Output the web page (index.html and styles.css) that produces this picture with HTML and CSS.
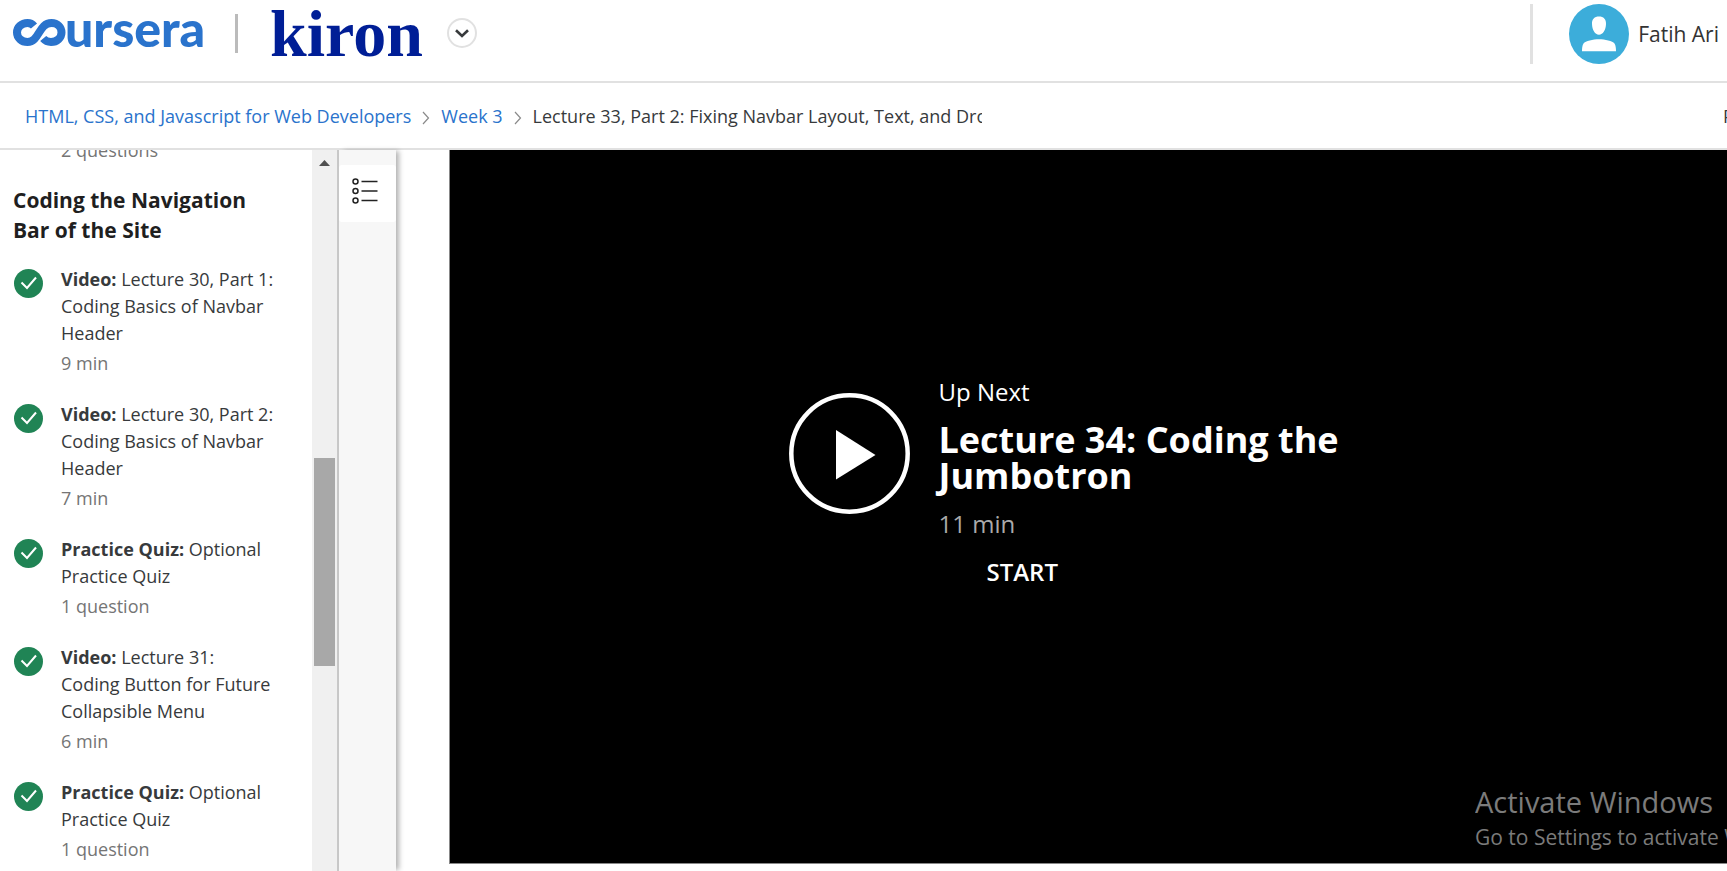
FILE: index.html
```html
<!DOCTYPE html>
<html lang="en">
<head>
<meta charset="utf-8">
<title>Lecture 33, Part 2 | Coursera</title>
<meta name="viewport" content="width=device-width, initial-scale=1">
<link rel="stylesheet" href="styles.css">
</head>
<body>
<svg class="sprite" aria-hidden="true">
  <symbol id="check" viewBox="0 0 29 29">
    <circle cx="14.500" cy="14.500" r="14.500" fill="#208455"/>
    <path d="M7.500 13.500l5.500 5.500 9-10.500" fill="none" stroke="#fff" stroke-width="2"/>
  </symbol>
  <symbol id="crumb" viewBox="0 0 8 14">
    <path d="M1 1l5.500 6L1 13" fill="none" stroke="#8a8a8a" stroke-width="1.200"/>
  </symbol>
</svg>

<header class="header">
  <a class="coursera" href="#" aria-label="Coursera">
    <svg class="coursera-mark" width="53" height="27" viewBox="0 0 53 27" aria-hidden="true">
      <path d="M21 7C19.300 5 17 4 14.500 4C8.500 4 4 8.300 4 13.500s4.500 9.500 10.500 9.500c12 0 11-19 24-19C44.500 4 48.500 8.300 48.500 13.500s-4.500 9.500-10.500 9.500c-3.200 0-5.800-1.200-7.800-3.500" fill="none" stroke="#2a73cc" stroke-width="8"/>
    </svg><span class="coursera-word">ursera</span>
  </a>
  <span class="divider"></span>
  <a class="kiron" href="#">kiron</a>
  <button class="switch" type="button" aria-label="Switch program">
    <svg width="14" height="9" viewBox="0 0 14 9"><path d="M1 1.200l6 5.800 6-5.800" fill="none" stroke="#373a3c" stroke-width="2.600"/></svg>
  </button>
  <a class="user" href="#">
    <svg class="avatar" viewBox="0 0 60 60" aria-hidden="true">
      <circle cx="30" cy="30" r="30" fill="#3cadda"/>
      <path d="M30 12.500c4.500 0 7.200 2.500 7 7.500-.2 6-3 10.700-7 10.700s-6.800-4.700-7-10.700c-.2-5 2.500-7.500 7-7.500zM13 47.300c0-3 .3-6 1.500-7.800C16.500 37 24 35.300 30 35.300S43.500 37 45.500 39.500c1.200 1.800 1.500 4.800 1.500 7.800z" fill="#fff"/>
    </svg>
    <span>Fatih Ari</span>
  </a>
</header>

<nav class="crumbs" aria-label="Breadcrumb">
  <a href="#">HTML, CSS, and Javascript for Web Developers</a>
  <svg class="crumb-icon"><use href="#crumb"/></svg>
  <a href="#">Week 3</a>
  <svg class="crumb-icon"><use href="#crumb"/></svg>
  <span class="current">Lecture 33, Part 2: Fixing Navbar Layout, Text, and Dropdown</span>
  <a class="prev" href="#">Prev</a>
</nav>

<div class="main">
  <aside class="sidebar">
    <div class="outline">
      <p class="meta previous">2 questions</p>
      <h2>Coding the Navigation Bar of the Site</h2>
      <ul class="items">
        <li><svg class="check"><use href="#check"/></svg><div><a href="#"><strong>Video:</strong> Lecture 30, Part 1: Coding Basics of Navbar Header</a><p class="meta">9 min</p></div></li>
        <li><svg class="check"><use href="#check"/></svg><div><a href="#"><strong>Video:</strong> Lecture 30, Part 2: Coding Basics of Navbar Header</a><p class="meta">7 min</p></div></li>
        <li><svg class="check"><use href="#check"/></svg><div><a href="#"><strong>Practice Quiz:</strong> Optional Practice Quiz</a><p class="meta">1 question</p></div></li>
        <li><svg class="check"><use href="#check"/></svg><div><a href="#"><strong>Video:</strong> Lecture 31: Coding Button for Future Collapsible Menu</a><p class="meta">6 min</p></div></li>
        <li><svg class="check"><use href="#check"/></svg><div><a href="#"><strong>Practice Quiz:</strong> Optional Practice Quiz</a><p class="meta">1 question</p></div></li>
      </ul>
    </div>
    <div class="scrollbar">
      <svg width="11" height="6" viewBox="0 0 11 6"><path d="M0 6L5.500 0 11 6z" fill="#505050"/></svg>
      <span class="thumb"></span>
    </div>
  </aside>

  <div class="rail">
    <button class="rail-tab" type="button" aria-label="Course outline">
      <svg width="26" height="26" viewBox="0 0 26 26" fill="none" stroke="#222" stroke-width="1.500">
        <circle cx="3.500" cy="3.500" r="2.500"/><circle cx="3.500" cy="13" r="2.500"/><circle cx="3.500" cy="22.500" r="2.500"/>
        <path d="M9.500 3.500h16M9.500 13h16M9.500 22.500h16"/>
      </svg>
    </button>
  </div>

  <main class="stage">
    <section class="video">
      <div class="next">
        <button class="play" type="button" aria-label="Play next lecture">
          <svg viewBox="0 0 121 121"><circle cx="60.500" cy="60.500" r="58.200" fill="none" stroke="#fff" stroke-width="4.500"/><path d="M47 37l39.500 25L47 86.500z" fill="#fff"/></svg>
        </button>
        <div class="next-text">
          <p class="up">Up Next</p>
          <h1>Lecture 34: Coding the Jumbotron</h1>
          <p class="length">11 min</p>
          <button class="start" type="button">START</button>
        </div>
      </div>
    </section>
  </main>
</div>

<div class="watermark">
  <p class="wm-title">Activate Windows</p>
  <p class="wm-text">Go to Settings to activate Windows.</p>
</div>
</body>
</html>
```

FILE: styles.css
```css
* { box-sizing: border-box; }
body {
  margin: 0;
  height: 100vh;
  display: flex;
  flex-direction: column;
  position: relative;
  overflow: hidden;
  background: #fff;
  color: #373a3c;
  font: 18px/27px "Open Sans", "Noto Sans", sans-serif;
}
p, h1, h2, ul { margin: 0; padding: 0; }
a { color: inherit; text-decoration: none; }
button { padding: 0; border: 0; background: none; font: inherit; color: inherit; }
svg { display: block; flex: none; }
.sprite { position: absolute; width: 0; height: 0; }

.header {
  flex: none;
  height: 83px;
  display: flex;
  align-items: flex-start;
  padding: 4px 8px 0 13px;
  border-bottom: 2px solid #e1e1e1;
}
.coursera { display: flex; align-items: flex-start; width: 192px; margin-top: 15px; }
.coursera-word {
  font: 900 50px/50px Lato, sans-serif;
  color: #2a73cc;
  margin: -16px 0 0 -1px;
}
.divider { width: 3px; height: 39px; margin: 10px 32px 0 30px; background: #bbb; }
.kiron {
  width: 154px;
  font: bold 66px/60px "Liberation Serif", serif;
  color: #001e96;
}
.switch {
  width: 30px;
  height: 30px;
  margin: 14px 0 0 23px;
  display: grid;
  place-items: center;
  border: 2px solid #e1e1e1;
  border-radius: 50%;
}
.user {
  display: flex;
  align-items: center;
  gap: 9px;
  height: 60px;
  margin-left: auto;
  padding-left: 36px;
  border-left: 3px solid #e1e1e1;
  font-size: 21px;
  color: #333;
}
.avatar { width: 60px; height: 60px; }

.crumbs {
  flex: none;
  height: 67px;
  display: flex;
  align-items: center;
  padding: 2px 0 0 25px;
  border-bottom: 2px solid #e1e1e1;
  white-space: nowrap;
  overflow: hidden;
}
.crumbs a { color: #2a73cc; }
.crumb-icon { width: 8px; height: 14px; margin: 2px 11px 0; }
.current { width: 449px; overflow: hidden; }
.crumbs .prev { width: 4px; margin-left: auto; overflow: hidden; color: #373a3c; }

.main { flex: 1; min-height: 0; display: flex; }
.sidebar { flex: none; width: 339px; display: flex; overflow: hidden; border-right: 2px solid #c8c8c8; }
.outline { flex: 1; padding: 0 36px 0 13px; }
.meta { color: #757575; }
.previous { margin: -13px 0 21px 48px; }
h2 { font-size: 21px; font-weight: 700; line-height: 30px; color: #1f1f1f; margin-bottom: 21px; }
.items { list-style: none; display: grid; gap: 24px; }
.items li { display: flex; gap: 18px; }
.items a { display: block; margin-bottom: 3px; }
.check { width: 29px; height: 29px; margin: 3px 0 0 1px; }
.scrollbar {
  flex: none;
  width: 25px;
  display: flex;
  flex-direction: column;
  align-items: center;
  padding-top: 10px;
  background: #f0f0f0;
}
.thumb { width: 21px; height: 208px; margin-top: 292px; background: #a8a8a8; }

.rail {
  flex: none;
  width: 57px;
  padding-top: 15px;
  background: #f7f7f7;
  box-shadow: 4px 0 5px -1px rgba(0, 0, 0, .3);
}
.rail-tab { display: block; width: 57px; height: 57px; padding: 0 0 5px 13px; border-radius: 3px; background: #fff; }

.stage { flex: 1; min-width: 0; display: flex; padding: 0 0 7px 53px; }
.video {
  flex: 1;
  display: grid;
  place-items: center;
  border: solid #888;
  border-width: 0 0 1px 1px;
  background: #000;
  color: #fff;
}
.next { display: flex; gap: 29px; width: 600px; max-width: 100%; padding-bottom: 50px; }
.play { flex: none; width: 121px; height: 121px; margin-top: 18px; }
.up, .length, .start { font-size: 24px; line-height: 33px; }
h1 { margin: 14px 0 13px; font-size: 36px; line-height: 36px; }
.length { color: #aaa; }
.start { display: block; margin: 15px 0 0 48px; font-weight: 600; }

.watermark {
  position: absolute;
  right: 0;
  bottom: 19px;
  width: 252px;
  overflow: hidden;
  white-space: nowrap;
  color: #7b7b7b;
  font-family: "Open Sans", "Noto Sans", sans-serif;
}
.wm-title { font-size: 29px; line-height: 40px; }
.wm-text { font-size: 21px; line-height: 30px; }
```
